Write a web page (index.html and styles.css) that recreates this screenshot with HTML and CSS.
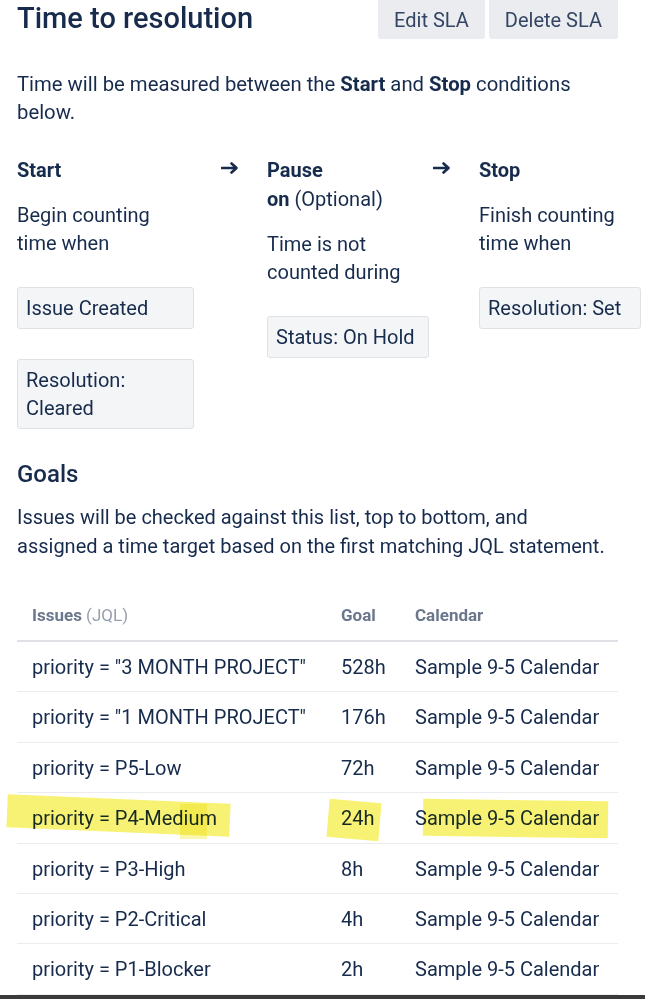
FILE: index.html
```html
<!DOCTYPE html>
<html lang="en">
<head>
  <meta charset="UTF-8">
  <title>Time to resolution</title>
  <meta name="viewport" content="width=device-width, initial-scale=1.0">
  <link rel="stylesheet" href="styles.css">
</head>
<body>
  <div class="page">
    <div class="sla-header">
      <h1 class="sla-title">Time to resolution</h1>
      <div class="sla-actions">
        <button class="sla-btn">Edit SLA</button>
        <button class="sla-btn">Delete SLA</button>
      </div>
    </div>

    <p class="intro">Time will be measured between the <b>Start</b> and <b>Stop</b> conditions below.</p>

    <div class="flow">
      <div class="flow-col col-start">
        <div class="flow-title"><b>Start</b></div>
        <div class="flow-desc">Begin counting time when</div>
        <div class="cond">Issue Created</div>
        <div class="cond">Resolution: Cleared</div>
      </div>
      <div class="flow-arrow">
        <svg width="18" height="12" viewBox="0 0 18 12"><path d="M1 6h14M10.5 1.5L15.5 6l-5 4.5" fill="none" stroke="#172b4d" stroke-width="2.6" stroke-linecap="round" stroke-linejoin="round"/></svg>
      </div>
      <div class="flow-col col-pause">
        <div class="flow-title"><b>Pause</b><br><b>on</b> (Optional)</div>
        <div class="flow-desc">Time is not counted during</div>
        <div class="cond">Status: On Hold</div>
      </div>
      <div class="flow-arrow">
        <svg width="18" height="12" viewBox="0 0 18 12"><path d="M1 6h14M10.5 1.5L15.5 6l-5 4.5" fill="none" stroke="#172b4d" stroke-width="2.6" stroke-linecap="round" stroke-linejoin="round"/></svg>
      </div>
      <div class="flow-col col-stop">
        <div class="flow-title"><b>Stop</b></div>
        <div class="flow-desc">Finish counting time when</div>
        <div class="cond">Resolution: Set</div>
      </div>
    </div>

    <h2 class="goals-title">Goals</h2>
    <p class="goals-text">Issues will be checked against this list, top to bottom, and<br>assigned a time target based on the first matching JQL statement.</p>

    <div class="goals-wrap">
      <table class="goals">
        <colgroup>
          <col class="c-jql">
          <col class="c-goal">
          <col class="c-cal">
        </colgroup>
        <thead>
          <tr>
            <th>Issues <span class="muted">(JQL)</span></th>
            <th>Goal</th>
            <th>Calendar</th>
          </tr>
        </thead>
        <tbody>
          <tr><td>priority = "3 MONTH PROJECT"</td><td>528h</td><td>Sample 9-5 Calendar</td></tr>
          <tr><td>priority = "1 MONTH PROJECT"</td><td>176h</td><td>Sample 9-5 Calendar</td></tr>
          <tr><td>priority = P5-Low</td><td>72h</td><td>Sample 9-5 Calendar</td></tr>
          <tr><td>priority = P4-Medium</td><td>24h</td><td>Sample 9-5 Calendar</td></tr>
          <tr><td>priority = P3-High</td><td>8h</td><td>Sample 9-5 Calendar</td></tr>
          <tr><td>priority = P2-Critical</td><td>4h</td><td>Sample 9-5 Calendar</td></tr>
          <tr><td>priority = P1-Blocker</td><td>2h</td><td>Sample 9-5 Calendar</td></tr>
        </tbody>
      </table>
      <!-- marker strokes drawn over the P4 row -->
      <span class="marker mk-jql"></span>
      <span class="marker mk-jql-end"></span>
      <span class="marker mk-goal"></span>
      <span class="marker mk-cal"></span>
    </div>
  </div>
  <div class="screen-edge"></div>
</body>
</html>
```

FILE: styles.css
```css
html, body {
  margin: 0;
  padding: 0;
  background: #fff;
}
body {
  font-family: Roboto, 'Liberation Sans', Arial, sans-serif;
  font-size: 20px;
  line-height: 28px;
  color: #172b4d;
  width: 645px;
  height: 999px;
  overflow: hidden;
  position: relative;
}
.page {
  padding: 0 27px 0 17px;
}
b { font-weight: 700; }

.sla-header {
  display: flex;
  align-items: flex-start;
  justify-content: space-between;
  height: 39px;
}
.sla-title {
  margin: 0;
  font-size: 29px;
  font-weight: 500;
  line-height: 36px;
  color: #172b4d;
}
.sla-actions {
  display: flex;
  gap: 4px;
}
.sla-btn {
  font-family: inherit;
  font-size: 20px;
  color: #344563;
  background: #ebecf0;
  border: none;
  border-radius: 0 0 3px 3px;
  height: 39px;
  padding: 0 16px;
  cursor: pointer;
}

.intro {
  margin: 31px 0 0 0;
  font-size: 20.3px;
}

.flow {
  display: grid;
  grid-template-columns: 177px 73px 162px 50px 162px;
  margin-top: 30px;
  align-items: start;
}
.flow-title {
  line-height: 29px;
  margin-bottom: 16px;
}
.flow-desc {
  margin-bottom: 30px;
}
.flow-arrow {
  display: flex;
  justify-content: flex-end;
  padding: 6px 28px 0 0;
}
.cond {
  background: #f4f5f7;
  border: 1px solid #dfe1e6;
  border-radius: 3px;
  padding: 6px 8px;
  margin-bottom: 30px;
}
.cond:last-child { margin-bottom: 0; }

.goals-title {
  margin: 30px 0 0 0;
  font-size: 24px;
  font-weight: 500;
  line-height: 30px;
}
.goals-text {
  margin: 14px 0 0 0;
  line-height: 29px;
}

.goals-wrap {
  position: relative;
  margin-top: 30px;
}
.goals {
  width: 601px;
  border-collapse: collapse;
  table-layout: fixed;
}
.c-jql { width: 309px; }
.c-goal { width: 74px; }
.c-cal { width: 218px; }
.goals th {
  text-align: left;
  font-size: 17px;
  font-weight: 700;
  color: #6b778c;
  line-height: 24px;
  padding: 12px 0 13px 15px;
  border-bottom: 2px solid #dfe1e6;
}
.goals th .muted {
  font-weight: 400;
  color: #97a0af;
}
.goals td {
  padding: 11px 0 10px 15px;
  line-height: 28.4px;
  border-bottom: 1px solid #ebecf0;
  white-space: nowrap;
}

.marker {
  position: absolute;
  background: #f6f05c;
  mix-blend-mode: multiply;
  opacity: 0.85;
  pointer-events: none;
}
.mk-jql {
  left: -10px;
  top: 208px;
  width: 223px;
  height: 33px;
  transform: rotate(2.4deg);
}
.mk-jql-end {
  left: 163px;
  top: 213px;
  width: 27px;
  height: 35px;
  opacity: 0.5;
}
.mk-goal {
  left: 311px;
  top: 210px;
  width: 52px;
  height: 38px;
  transform: rotate(5deg);
}
.mk-cal {
  left: 406px;
  top: 209px;
  width: 185px;
  height: 37px;
  transform: rotate(0.8deg);
}

.screen-edge {
  position: absolute;
  left: 0;
  right: 0;
  bottom: 0;
  height: 4px;
  background: #3b3b3b;
}
```
